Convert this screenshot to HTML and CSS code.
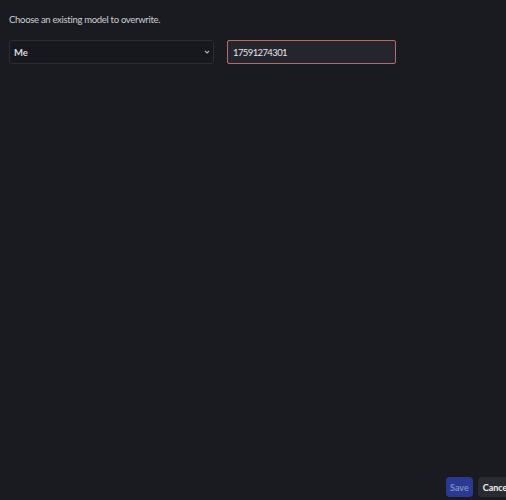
FILE: index.html
```html
<!DOCTYPE html>
<html lang="en">
<head>
  <meta charset="UTF-8">
  <title>Overwrite Model</title>
  <link rel="stylesheet" href="styles.css">
</head>
<body>
  <div class="panel">
    <p class="hint">Choose an existing model to overwrite.</p>
    <div class="fields">
      <div class="select-wrap">
        <select id="model">
          <option value="me">Me</option>
        </select>
        <svg class="chevron" width="6" height="4" viewBox="0 0 6 4"><path d="M1 1l2 2 2-2" fill="none" stroke="#aeb0b8" stroke-width="1.1"/></svg>
      </div>
      <input type="text" id="name" class="name-input" value="17591274301">
    </div>
  </div>

  <div class="actions">
    <button class="btn save" disabled>Save</button>
    <button class="btn cancel">Cancel</button>
  </div>
</body>
</html>
```

FILE: styles.css
```css
html, body {
  height: 100%;
}
body {
  background-color: #1a1b20;
  color: #d8d9de;
  font-family: Lato, "Noto Sans", sans-serif;
  font-size: 9.5px;
  margin: 0;
  overflow: hidden;
  position: relative;
}
.panel {
  padding: 12px 9px;
}
.hint {
  margin: 0 0 13px;
  line-height: 15px;
  letter-spacing: -0.3px;
  color: #cfd0d5;
}
.fields {
  display: flex;
  gap: 13px;
}
.select-wrap {
  position: relative;
  width: 205px;
}
select {
  appearance: none;
  width: 100%;
  height: 24px;
  padding: 0 4px;
  background-color: #17181d;
  border: 1px solid #2c2d34;
  border-radius: 3px;
  color: #d8d9de;
  font-family: inherit;
  font-size: 9.5px;
  font-weight: 700;
}
.chevron {
  position: absolute;
  right: 4px;
  top: 10px;
}
.name-input {
  box-sizing: border-box;
  width: 169px;
  height: 24px;
  padding: 0 5px;
  background-color: #25262d;
  border: 1px solid #b86b6b;
  border-radius: 2px;
  color: #e4e5e9;
  font-family: inherit;
  font-size: 9.5px;
  letter-spacing: -0.6px;
  outline: none;
}
.actions {
  position: absolute;
  left: 446px;
  top: 477px;
  display: flex;
  gap: 5px;
}
.btn {
  height: 20px;
  padding: 0 5px;
  border: none;
  border-radius: 4px;
  font-family: inherit;
  font-size: 9px;
  font-weight: 700;
}
.save {
  padding: 0 4px;
  background-color: #2a3a94;
  color: #7f8ac4;
}
.cancel {
  background-color: #2a2b31;
  color: #f0f0f2;
  white-space: nowrap;
}
```
